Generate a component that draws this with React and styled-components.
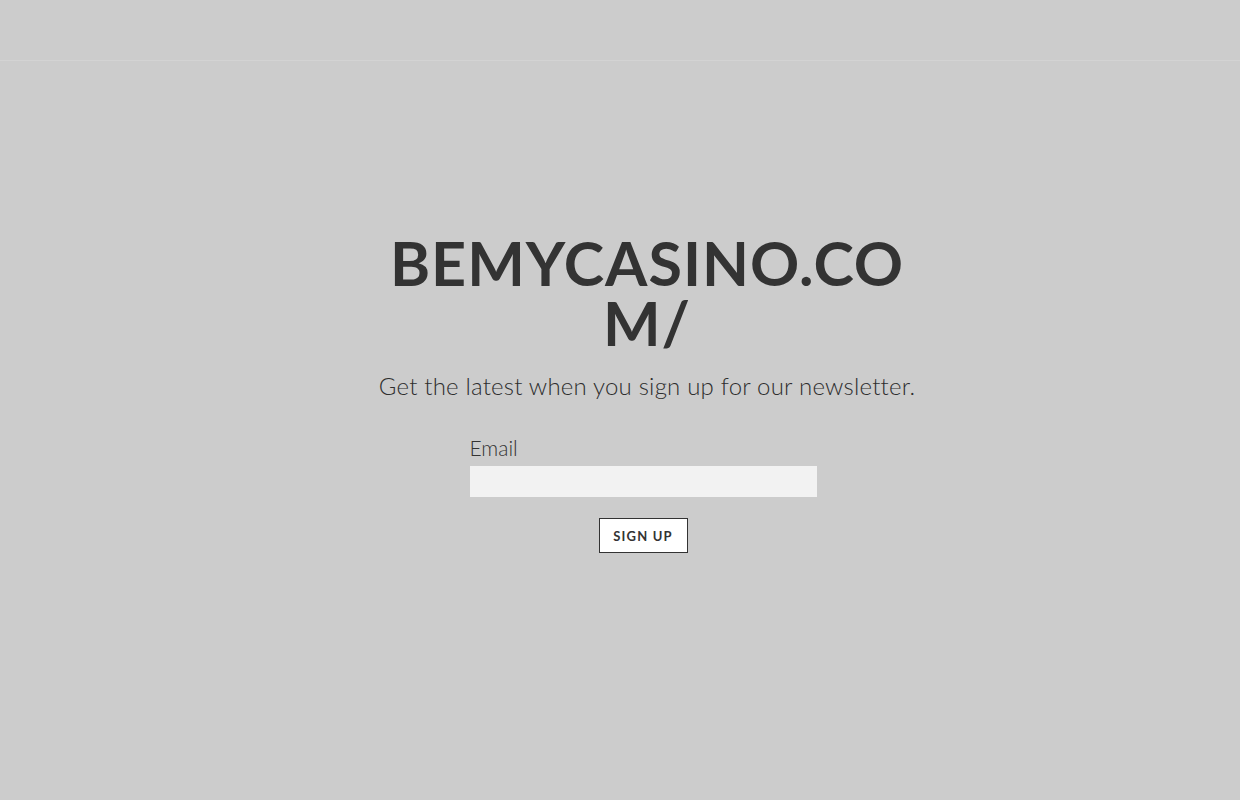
import React from 'react'
import styled, { createGlobalStyle } from 'styled-components'

const Global = createGlobalStyle`
  html, body {
    margin: 0;
    padding: 0;
    background: #cccccc;
  }
  * { box-sizing: border-box; }
`

const Page = styled.div`
  min-height: 800px;
  background: #cccccc;
  display: flex;
  flex-direction: column;
`

const Header = styled.header`
  height: 61px;
  border-bottom: 1px solid #d3d3d3;
`

const Main = styled.main`
  display: flex;
  flex-direction: column;
  align-items: center;
  padding-top: 172px;
  padding-left: 54px;
`

const Title = styled.h1`
  margin: 0;
  width: 540px;
  text-align: center;
  font-family: Lato, "Noto Sans", sans-serif;
  font-weight: 700;
  font-size: 61px;
  line-height: 60px;
  letter-spacing: 1px;
  color: #333333;
  word-break: break-all;
`

const Lead = styled.p`
  margin: 18px 0 0;
  font-family: Lato, "Open Sans", sans-serif;
  font-weight: 300;
  font-size: 24px;
  letter-spacing: 0.2px;
  color: #2e2e2e;
`

const Form = styled.form`
  margin-top: 35px;
  margin-left: -8px;
  width: 347px;
  display: flex;
  flex-direction: column;
  align-items: center;
`

const Label = styled.label`
  align-self: flex-start;
  font-family: Lato, "Open Sans", sans-serif;
  font-weight: 300;
  font-size: 21px;
  color: #333333;
  margin-bottom: 6px;
`

const Input = styled.input`
  width: 100%;
  height: 31px;
  border: none;
  background: #f2f2f2;
  outline: none;
`

const Button = styled.button`
  margin-top: 21px;
  width: 89px;
  height: 35px;
  background: #ffffff;
  border: 1px solid #333333;
  font-family: Lato, "Noto Sans", sans-serif;
  font-weight: 700;
  font-size: 13px;
  letter-spacing: 1.2px;
  color: #333333;
  cursor: pointer;
  padding: 0;
`

export default function App() {
  return (
    <Page>
      <Global />
      <Header />
      <Main>
        <Title>BEMYCASINO.COM/</Title>
        <Lead>Get the latest when you sign up for our newsletter.</Lead>
        <Form onSubmit={e => e.preventDefault()}>
          <Label htmlFor="email">Email</Label>
          <Input id="email" type="email" />
          <Button type="submit">SIGN UP</Button>
        </Form>
      </Main>
    </Page>
  )
}
